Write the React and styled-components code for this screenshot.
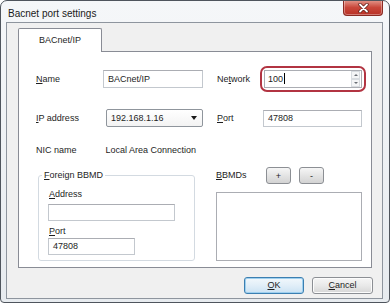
import styled, { createGlobalStyle } from "styled-components";

const GlobalStyles = createGlobalStyle`
  html, body {
    margin: 0;
    padding: 0;
    background: #ffffff;
  }
  body {
    font-family: "Liberation Sans", Arial, sans-serif;
    font-size: 9px;
    color: #1e1e1e;
  }
  * {
    box-sizing: border-box;
  }
`;

const Window = styled.div`
  width: 390px;
  height: 303px;
  border: 1px solid #4f555d;
  border-radius: 7px 7px 4px 4px;
  background: linear-gradient(#f5f7f9, #e7ebef);
  padding: 0 6px 3px 5px;
  display: flex;
  flex-direction: column;
  overflow: hidden;
`;

const TitleBar = styled.div`
  height: 21px;
  display: flex;
  justify-content: space-between;
  align-items: flex-start;
  padding-left: 2px;
`;

const Title = styled.span`
  font-size: 10px;
  line-height: 12px;
  margin-top: 7px;
  color: #1a1a1a;
`;

const CloseButton = styled.div`
  width: 40px;
  height: 16px;
  margin-top: -1px;
  border: 1px solid #8a2a22;
  border-top: none;
  border-radius: 0 0 4px 4px;
  background: linear-gradient(#e49a8e, #c9473a 50%, #b83126);
  display: flex;
  align-items: center;
  justify-content: center;
  box-shadow: inset 0 0 0 1px rgba(255, 255, 255, 0.35);
`;

const Client = styled.div`
  flex: 1;
  border: 1px solid #8e959e;
  background: #f0f0f0;
  padding: 5px 10px 0 11px;
  display: flex;
  flex-direction: column;
`;

const Tab = styled.div`
  width: 84px;
  height: 24px;
  margin-bottom: -1px;
  border: 1px solid #898c95;
  border-bottom: none;
  border-radius: 2px 2px 0 0;
  background: #ffffff;
  display: flex;
  align-items: center;
  justify-content: center;
  position: relative;
  z-index: 1;
  padding-bottom: 2px;
`;

const Panel = styled.div`
  height: 217px;
  border: 1px solid #898c95;
  background: #ffffff;
  padding: 18px 0 0 17px;
  display: flex;
  flex-direction: column;
`;

const Row = styled.div`
  display: grid;
  grid-template-columns: 67px 100px 14px 46px 99px;
  height: 18px;
  margin-top: ${(p) => p.$mt || 0}px;
  align-items: center;
`;

const Label = styled.span`
  grid-column: ${(p) => p.$col};
  line-height: 13px;
  white-space: nowrap;
`;

const U = styled.span`
  text-decoration: underline;
  text-underline-offset: 1px;
`;

const TextBox = styled.div`
  grid-column: ${(p) => p.$col || "auto"};
  width: ${(p) => p.$w || "100%"};
  height: ${(p) => p.$h || 18}px;
  border: 1px solid #c3c8ce;
  border-top-color: #abadb3;
  background: #ffffff;
  padding: 0 4px;
  display: flex;
  align-items: center;
  line-height: 13px;
`;

const Combo = styled.div`
  grid-column: 2;
  margin-left: 3px;
  height: 18px;
  border: 1px solid #8f959c;
  border-radius: 2px;
  background: linear-gradient(#ffffff, #f3f3f3);
  padding: 0 5px 0 4px;
  display: flex;
  align-items: center;
  justify-content: space-between;
`;

const Arrow = styled.span`
  width: 0;
  height: 0;
  border-left: 3px solid transparent;
  border-right: 3px solid transparent;
  border-top: 4px solid #1a1a1a;
`;

const Highlight = styled.div`
  grid-column: 5;
  margin: -4px -4px -4px -3px;
  border: 2px solid #b23442;
  border-radius: 7px;
  padding: 2px;
`;

const SpinBox = styled.div`
  height: 18px;
  border: 1px solid #abadb3;
  background: #ffffff;
  display: flex;
  align-items: center;
  padding-left: 3px;
`;

const SpinText = styled.span`
  flex: 1;
  line-height: 13px;
`;

const Caret = styled.span`
  display: inline-block;
  width: 1px;
  height: 11px;
  background: #000;
  vertical-align: -2px;
  margin-left: 1px;
`;

const SpinButtons = styled.div`
  width: 9px;
  height: 100%;
  display: flex;
  flex-direction: column;
  margin-right: 1px;
`;

const SpinHalf = styled.div`
  flex: 1;
  border: 1px solid #d8dce0;
  background: #f4f5f6;
  display: flex;
  align-items: center;
  justify-content: center;
`;

const Tri = styled.span`
  width: 0;
  height: 0;
  border-left: 2px solid transparent;
  border-right: 2px solid transparent;
  ${(p) =>
    p.$up
      ? "border-bottom: 2px solid #6a6f75;"
      : "border-top: 2px solid #6a6f75;"}
`;

const Bottom = styled.div`
  display: flex;
  margin-top: 8px;
  align-items: flex-start;
`;

const GroupBox = styled.fieldset`
  margin: 2px 0 0 2px;
  width: 157px;
  height: 92px;
  border: 1px solid #d3dae1;
  border-radius: 3px;
  padding: 6px 9px 0 9px;
  min-inline-size: 0;
  display: flex;
  flex-direction: column;
`;

const Legend = styled.legend`
  padding: 0 2px;
  margin-left: -6px;
  line-height: 13px;
`;

const FieldLabel = styled.span`
  line-height: 13px;
  margin-left: 1px;
  margin-bottom: ${(p) => p.$mb || 0}px;
  margin-top: ${(p) => p.$mt || 0}px;
`;

const BbmdColumn = styled.div`
  margin-left: 21px;
  width: 146px;
  display: flex;
  flex-direction: column;
`;

const BbmdHeader = styled.div`
  display: flex;
  align-items: center;
  height: 17px;
`;

const BbmdLabel = styled.span`
  width: 50px;
  line-height: 13px;
`;

const SmallButton = styled.div`
  width: 25px;
  height: 17px;
  margin-right: 8px;
  border: 1px solid #8c8f94;
  border-radius: 3px;
  background: linear-gradient(#f6f6f6, #e4e4e4 50%, #d3d3d3);
  display: flex;
  align-items: center;
  justify-content: center;
  font-size: 9px;
`;

const ListBox = styled.div`
  margin-top: 8px;
  height: 69px;
  border: 1px solid #abadb3;
  background: #ffffff;
`;

const Footer = styled.div`
  display: flex;
  justify-content: flex-end;
  gap: 8px;
  margin-top: 9px;
  margin-right: -1px;
`;

const DialogButton = styled.div`
  width: ${(p) => p.$w}px;
  height: 17px;
  border: 1px solid ${(p) => (p.$default ? "#3c7fb1" : "#8c8f94")};
  border-radius: 3px;
  background: ${(p) =>
    p.$default
      ? "linear-gradient(#f2f8fc, #e1eef8 50%, #cbe2f3)"
      : "linear-gradient(#f6f6f6, #e9e9e9 50%, #d6d6d6)"};
  box-shadow: ${(p) =>
    p.$default ? "inset 0 0 0 1px #9fd0ef" : "inset 0 0 0 1px #fcfcfc"};
  display: flex;
  align-items: center;
  justify-content: center;
  line-height: 13px;
`;

function CloseIcon() {
  return (
    <svg width="11" height="10" viewBox="0 0 11 10">
      <path
        d="M2 1.5 L9 8.5 M9 1.5 L2 8.5"
        stroke="#5a1a14"
        strokeWidth="3.2"
        strokeLinecap="round"
      />
      <path
        d="M2 1.5 L9 8.5 M9 1.5 L2 8.5"
        stroke="#ffffff"
        strokeWidth="1.8"
        strokeLinecap="round"
      />
    </svg>
  );
}

export default function App() {
  return (
    <>
      <GlobalStyles />
      <Window>
        <TitleBar>
          <Title>Bacnet port settings</Title>
          <CloseButton>
            <CloseIcon />
          </CloseButton>
        </TitleBar>

        <Client>
          <Tab>BACnet/IP</Tab>
          <Panel>
            <Row>
              <Label $col={1}>
                <U>N</U>ame
              </Label>
              <TextBox $col={2}>BACnet/IP</TextBox>
              <Label $col={4}>
                Ne<U>t</U>work
              </Label>
              <Highlight>
                <SpinBox>
                  <SpinText>
                    100
                    <Caret />
                  </SpinText>
                  <SpinButtons>
                    <SpinHalf>
                      <Tri $up />
                    </SpinHalf>
                    <SpinHalf>
                      <Tri />
                    </SpinHalf>
                  </SpinButtons>
                </SpinBox>
              </Highlight>
            </Row>

            <Row $mt={21}>
              <Label $col={1}>
                <U>I</U>P address
              </Label>
              <Combo>
                <span>192.168.1.16</span>
                <Arrow />
              </Combo>
              <Label $col={4}>
                <U>P</U>ort
              </Label>
              <TextBox $col={5} $h={17}>
                47808
              </TextBox>
            </Row>

            <Row $mt={14}>
              <Label $col={1}>NIC name</Label>
              <Label $col="2 / 4">&nbsp;Local Area Connection</Label>
            </Row>

            <Bottom>
              <GroupBox>
                <Legend>
                  <U>F</U>oreign BBMD
                </Legend>
                <FieldLabel $mb={3}>
                  <U>A</U>ddress
                </FieldLabel>
                <TextBox $w="127px" $h={17}></TextBox>
                <FieldLabel $mt={4} $mb={0}>
                  <U>P</U>ort
                </FieldLabel>
                <TextBox $w="87px" $h={17}>
                  47808
                </TextBox>
              </GroupBox>

              <BbmdColumn>
                <BbmdHeader>
                  <BbmdLabel>
                    <U>B</U>BMDs
                  </BbmdLabel>
                  <SmallButton>+</SmallButton>
                  <SmallButton>-</SmallButton>
                </BbmdHeader>
                <ListBox />
              </BbmdColumn>
            </Bottom>
          </Panel>

          <Footer>
            <DialogButton $w={60} $default>
              <span>
                <U>O</U>K
              </span>
            </DialogButton>
            <DialogButton $w={61}>
              <span>
                <U>C</U>ancel
              </span>
            </DialogButton>
          </Footer>
        </Client>
      </Window>
    </>
  );
}
